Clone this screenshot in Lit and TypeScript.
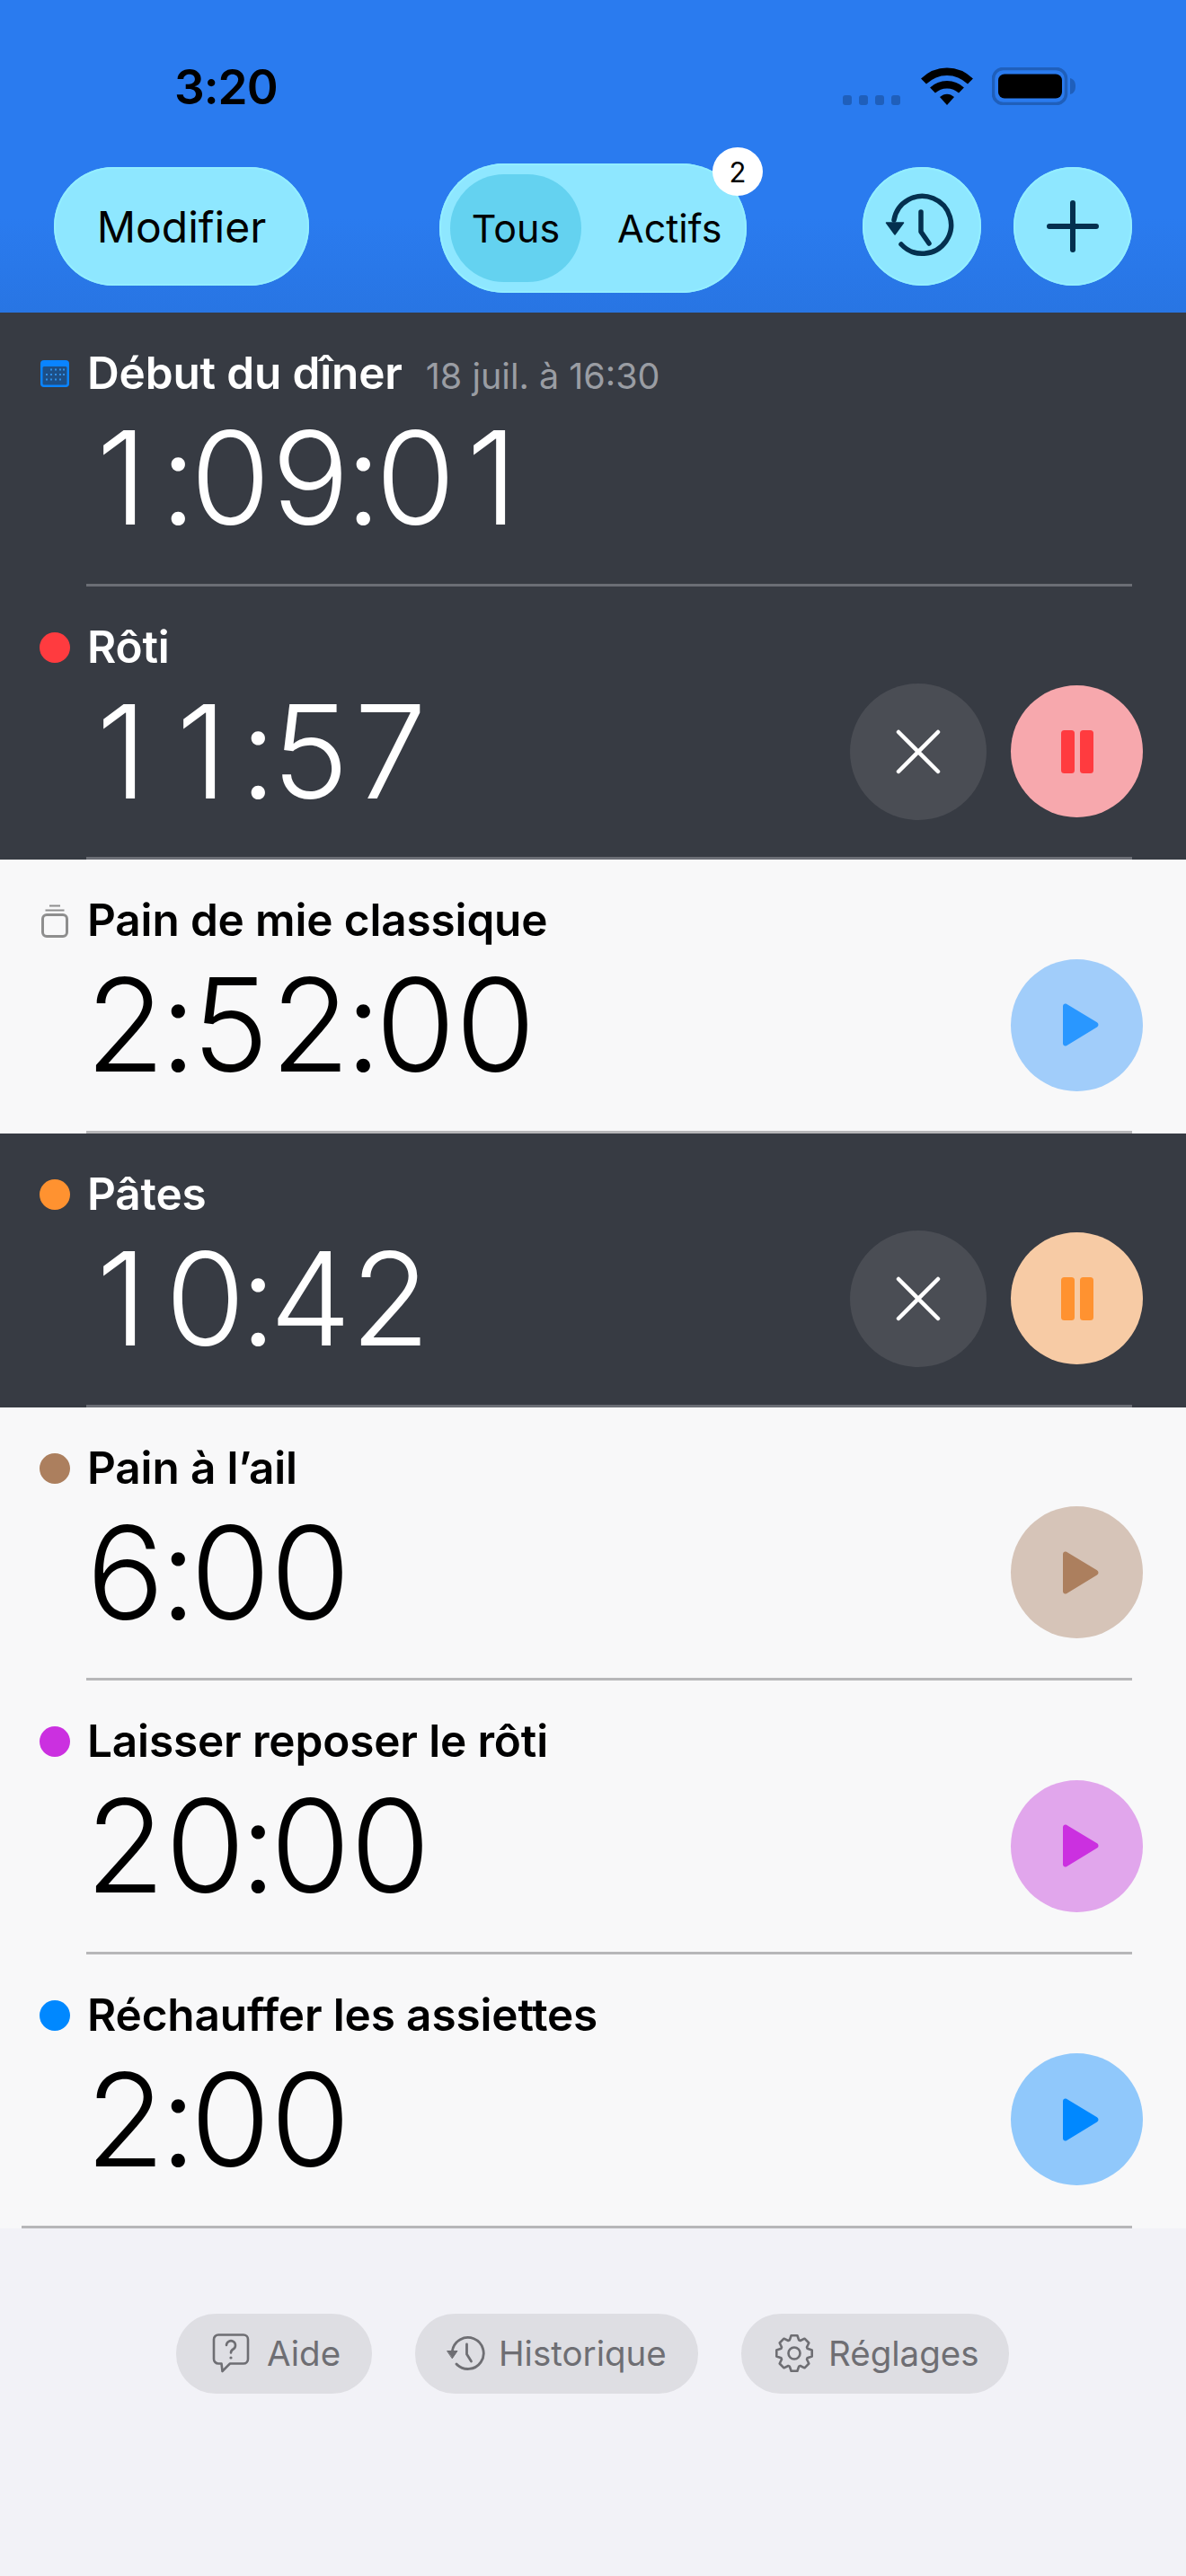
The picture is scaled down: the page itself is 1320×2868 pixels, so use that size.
import { LitElement, html, css, svg } from "lit";
import { customElement } from "lit/decorators.js";

type Row = {
  name: string; time: string; dark?: boolean; color?: string; icon?: "cal" | "jar";
  date?: string; mode?: "run" | "play" | "none"; bg?: string; fg?: string; full?: boolean;
};

const ROWS: Row[] = [
  { name: "Début du dîner", time: "1:09:01", dark: true, icon: "cal", date: "18 juil. à 16:30", mode: "none" },
  { name: "Rôti", time: "11:57", dark: true, color: "#ff3b3f", mode: "run", bg: "#f7a8ad", fg: "#ff3b3f" },
  { name: "Pain de mie classique", time: "2:52:00", icon: "jar", mode: "play", bg: "#a1cdfa", fg: "#2997ff" },
  { name: "Pâtes", time: "10:42", dark: true, color: "#ff9230", mode: "run", bg: "#f7cba5", fg: "#ff9230" },
  { name: "Pain à l’ail", time: "6:00", color: "#ac7f5e", mode: "play", bg: "#d6c4b8", fg: "#ac7f5e" },
  { name: "Laisser reposer le rôti", time: "20:00", color: "#cb30e0", mode: "play", bg: "#e1a6ec", fg: "#cb30e0" },
  { name: "Réchauffer les assiettes", time: "2:00", color: "#0088ff", mode: "play", bg: "#90c8fb", fg: "#0088ff", full: true },
];

const calIcon = svg`<svg class="ico" viewBox="0 0 32 30" width="32" height="30">
  <rect x="0" y="0" width="32" height="30" rx="4" fill="#0a84ff"/>
  <rect x="2.5" y="7" width="27" height="20.5" rx="1.5" fill="#1d4f86"/>
  <g fill="#2f8fe8">
    ${[10.5, 16, 21.5].map((y, r) =>
      [7, 12, 17, 22, 26].filter((_, i) => (r === 0 ? i > 0 : r === 2 ? i < 4 : true)).map((x) =>
        svg`<rect x="${x - 1}" y="${y - 1}" width="2" height="2"/>`))}
  </g></svg>`;

const jarIcon = svg`<svg class="ico" viewBox="0 0 30 37" width="30" height="37" fill="none" stroke="#8e8e8e">
  <path d="M9 1.5h12" stroke-width="2"/><path d="M4.5 6.5h21" stroke-width="2"/>
  <rect x="1.5" y="11.5" width="27" height="24" rx="4.5" stroke-width="3"/></svg>`;

const historyIcon = svg`<svg viewBox="0 0 132 132" width="132" height="132" fill="none" stroke="#04304f" stroke-linecap="round" stroke-linejoin="round">
  <path d="M35 59A32 32 0 1 1 43 86" stroke-width="5.5"/>
  <path d="M65 50v22l9 13" stroke-width="5.5"/>
  <path d="M26.5 62h19l-9.5 13z" fill="#04304f" stroke="#04304f" stroke-width="1.5"/></svg>`;

const plusIcon = svg`<svg viewBox="0 0 60 60" width="60" height="60" stroke="#04304f" stroke-width="6" stroke-linecap="round">
  <path d="M30 4v52M4 30h52"/></svg>`;

const smallHistory = svg`<svg viewBox="0 0 44 40" width="44" height="40" fill="none" stroke="#6e6e73" stroke-linecap="round" stroke-linejoin="round">
  <path d="M7.5 17A17.5 17.5 0 1 1 12 32" stroke-width="2.8"/>
  <path d="M23.500 10v11l5 8" stroke-width="2.800"/>
  <path d="M2 17.500h11l-5.500 8z" fill="#6e6e73" stroke-width="1"/></svg>`;

const helpIcon = svg`<svg viewBox="0 0 42 44" width="42" height="44" fill="none" stroke="#6e6e73" stroke-width="2.600" stroke-linejoin="round">
  <path d="M7 1.500h28a5 5 0 0 1 5 5v22a5 5 0 0 1-5 5H20l-8.500 8.500-1-8.500H7a5 5 0 0 1-5-5v-22a5 5 0 0 1 5-5z"/>
  <path d="M16 13a5 5 0 1 1 7.500 4.500c-1.800 1-2.500 2-2.500 4" stroke-linecap="round"/>
  <circle cx="21" cy="27" r="1.600" fill="#6e6e73" stroke="none"/></svg>`;

const gearPath = (() => {
  const cx = 21, cy = 22, n = 8, ro = 20, ri = 15.5;
  let d = "";
  for (let i = 0; i < n; i++) {
    const a = (i * 2 * Math.PI) / n - Math.PI / 2;
    const pts: [number, number][] = [[ri, -0.34], [ro, -0.17], [ro, 0.17], [ri, 0.34]];
    for (const [r, da] of pts) {
      const x = cx + r * Math.cos(a + da), y = cy + r * Math.sin(a + da);
      d += (d ? "L" : "M") + x.toFixed(1) + " " + y.toFixed(1);
    }
  }
  return d + "Z";
})();

const gearIcon = svg`<svg viewBox="0 0 42 44" width="42" height="44" fill="none" stroke="#6e6e73" stroke-width="2.600" stroke-linejoin="round">
  <path d="${gearPath}"/><circle cx="21" cy="22" r="6.500"/></svg>`;

@customElement("app-root")
export class AppRoot extends LitElement {
  static styles = css`
    :host { display: block; width: 1320px; height: 2868px; background: #f2f2f7; font-family: Inter, "Liberation Sans", sans-serif; overflow: hidden; }
    .head { height: 348px; background: linear-gradient(#2a7bef, #2a7bef 70%, #2875e3); display: flex; flex-direction: column; }
    .status { height: 164px; flex: none; display: flex; align-items: flex-start; padding: 64px 122px 0 194px; box-sizing: border-box; position: relative; }
    .clock { font-size: 53px; font-weight: 600; line-height: 66px; color: #000; letter-spacing: -1px; }
    .sys { margin-left: auto; display: flex; align-items: flex-end; height: 42px; margin-top: 11px; }
    .sigdots { display: flex; gap: 8px; margin-right: 23px; }
    .sigdots i { width: 10px; height: 11px; border-radius: 3px; background: #1f5fbb; display: block; }
    .wifi { margin-right: 21px; display: block; }
    .batt { display: block; }
    .ctl { flex: 1; display: flex; align-items: flex-start; padding: 18px 60px 0; }
    .modif { width: 284px; height: 132px; margin-top: 4px; border-radius: 66px; background: #8ee7ff; display: flex; align-items: center; justify-content: center; font-size: 48px; color: #000; box-shadow: inset 0 0 0 2px #93eeff; }
    .seg { position: relative; margin-left: 145px; width: 342px; height: 144px; border-radius: 72px; background: #8ee7ff; display: flex; align-items: center; padding-left: 12px; box-sizing: border-box; font-size: 43px; color: #000; box-shadow: inset 0 0 0 2px #93eeff; }
    .seg .on { width: 146px; height: 120px; border-radius: 60px; background: #64d2f0; display: flex; align-items: center; justify-content: center; }
    .seg .off { margin-left: 40px; }
    .badge { position: absolute; top: -18px; right: -18px; width: 56px; height: 54px; border-radius: 50%; background: #fff; display: flex; align-items: center; justify-content: center; font-size: 31px; color: #000; }
    .rbtns { margin-left: auto; display: flex; gap: 36px; margin-top: 4px; }
    .cbtn { width: 132px; height: 132px; border-radius: 50%; background: #8ee7ff; display: flex; align-items: center; justify-content: center; box-shadow: inset 0 0 0 2px #93eeff; }

    .row { height: 304.67px; display: flex; flex-direction: column; background: #f8f8f9; color: #000; box-sizing: border-box; }
    .row.dark { background: #373b43; color: #fff; }
    .body { flex: 1; display: flex; align-items: flex-start; padding: 0 48px 0 97px; min-height: 0; position: relative; }
    .main { flex: 1; min-width: 0; }
    .title { display: flex; align-items: baseline; height: 60px; margin-top: 37px; line-height: 60px; font-size: 49.5px; font-weight: 560; letter-spacing: -0.15px; white-space: nowrap; }
    .date { font-size: 39.5px; font-weight: 400; color: #9a9da3; margin-left: 26px; letter-spacing: 0; }
    .time { display: flex; font-size: 144px; font-weight: 265; line-height: 150px; margin-top: 12px; margin-left: -2px; white-space: nowrap; }
    .time span { display: block; width: 89px; text-align: center; flex: none; letter-spacing: -12px; transform: translateX(-6px); }
    .time .colon { width: 28px; text-align: left; letter-spacing: -20px; }
    .time .one { padding-right: 8px; width: 81px; }
    .lead { position: absolute; left: 42px; top: 50px; width: 38px; height: 36px; display: flex; align-items: center; justify-content: center; }
    .dot { width: 34px; height: 34px; border-radius: 50%; display: block; }
    .ico { display: block; }
    .acts { display: flex; align-items: center; gap: 27px; height: 152px; margin-top: 108px; }
    .abtn { border-radius: 50%; display: flex; align-items: center; justify-content: center; flex: none; }
    .x { width: 152px; height: 152px; background: #4a4d54; }
    .pp { width: 147px; height: 147px; }
    .sep { height: 3px; flex: none; margin: 0 60px 0 96px; background: #b7b7b9; }
    .dark .sep { background: #6b6e75; }
    .sep.full { margin-left: 24px; }

    .foot { display: flex; justify-content: flex-start; padding: 95px 0 0 196px; gap: 48px; }
    .pill { height: 89px; border-radius: 44px; background: #dedee3; display: flex; align-items: center; gap: 15px; box-sizing: border-box; font-size: 38.5px; color: #6e6e73; }
    .p1 { width: 218px; padding-left: 40px; gap: 19px; }
    .p2 { width: 315px; padding-left: 34px; }
    .p3 { width: 298px; padding-left: 38px; gap: 17px; }
  `;

  private chars(t: string) {
    return [...t].map((c) => html`<span class=${c === ":" ? "colon" : c === "1" ? "one" : ""}>${c}</span>`);
  }

  private actions(r: Row) {
    if (r.mode === "none") return null;
    if (r.mode === "run") {
      return html`<div class="acts">
        <div class="abtn x"><svg viewBox="0 0 50 50" width="50" height="50" stroke="#fff" stroke-width="4.500" stroke-linecap="round"><path d="M3 3l44 44M47 3L3 47"/></svg></div>
        <div class="abtn pp" style="background:${r.bg}"><svg viewBox="0 0 36 48" width="36" height="48" fill="${r.fg}"><rect width="15" height="48" rx="3.500"/><rect x="21" width="15" height="48" rx="3.500"/></svg></div>
      </div>`;
    }
    return html`<div class="acts">
      <div class="abtn pp" style="background:${r.bg}"><svg viewBox="0 0 44 50" width="44" height="50" style="margin-left:6px"><path d="M3 4.500c0-2.500 2-3.700 4-2.700l34 20.500c2 1.300 2 4 0 5.200L7 48.200c-2 1-4-.2-4-2.700z" fill="${r.fg}"/></svg></div>
    </div>`;
  }

  render() {
    return html`
      <div class="head">
        <div class="status">
          <div class="clock">3:20</div>
          <div class="sys">
            <div class="sigdots"><i></i><i></i><i></i><i></i></div>
            <svg class="wifi" viewBox="0 0 58 42" width="58" height="42" fill="none" stroke="#000" stroke-width="8.500">
              <path d="M3 15.500C18 1 40 1 55 15.500"/><path d="M13 25.500C22 17 36 17 45 25.500"/><path d="M21 33c5-4.500 11-4.500 16 0L29 42z" fill="#000" stroke="none"/>
            </svg>
            <svg class="batt" viewBox="0 0 94 42" width="94" height="42">
              <rect x="1.500" y="1.500" width="81" height="39" rx="11" fill="none" stroke="#1f5fbb" stroke-width="3.500"/>
              <rect x="7" y="8" width="71" height="27" rx="7" fill="#000" transform="translate(0,-0.500)"/>
              <path d="M87 12c4 1 6 4 6 9s-2 8-6 9z" fill="#1f5fbb"/>
            </svg>
          </div>
        </div>
        <div class="ctl">
          <div class="modif">Modifier</div>
          <div class="seg">
            <div class="on">Tous</div>
            <div class="off">Actifs</div>
            <div class="badge">2</div>
          </div>
          <div class="rbtns">
            <div class="cbtn">${historyIcon}</div>
            <div class="cbtn">${plusIcon}</div>
          </div>
        </div>
      </div>
      ${ROWS.map((r) => html`
        <div class="row ${r.dark ? "dark" : ""}">
          <div class="body">
            <div class="lead">
              ${r.icon === "cal" ? calIcon : r.icon === "jar" ? jarIcon : html`<span class="dot" style="background:${r.color}"></span>`}
            </div>
            <div class="main">
              <div class="title">${r.name}${r.date ? html`<span class="date">${r.date}</span>` : null}</div>
              <div class="time">${this.chars(r.time)}</div>
            </div>
            ${this.actions(r)}
          </div>
          <div class="sep ${r.full ? "full" : ""}"></div>
        </div>`)}
      <div class="foot">
        <div class="pill p1">${helpIcon}<span>Aide</span></div>
        <div class="pill p2">${smallHistory}<span>Historique</span></div>
        <div class="pill p3">${gearIcon}<span>Réglages</span></div>
      </div>
    `;
  }
}
